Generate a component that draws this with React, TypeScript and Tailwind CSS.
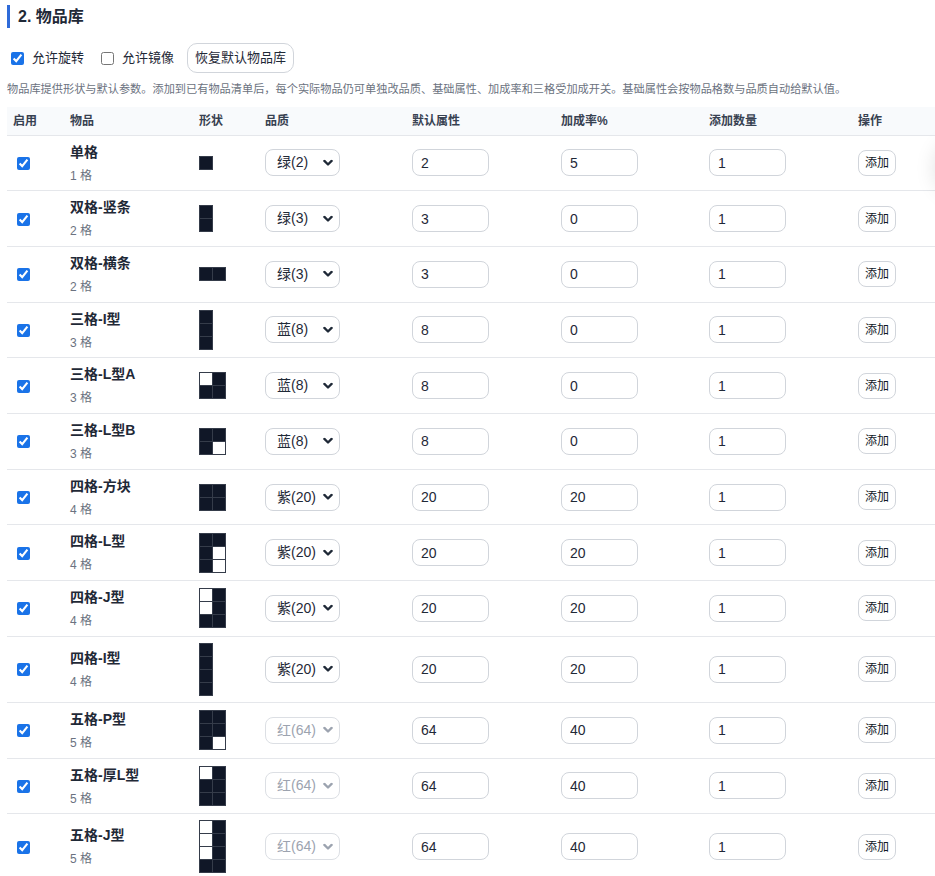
import React from "react";

type Item = {
  name: string;
  cells: number;
  quality: string;
  base: number;
  bonus: number;
  shape: number[][];
  muted?: boolean;
};

const ITEMS: Item[] = [
  { name: "单格", cells: 1, quality: "绿(2)", base: 2, bonus: 5, shape: [[1]] },
  { name: "双格-竖条", cells: 2, quality: "绿(3)", base: 3, bonus: 0, shape: [[1], [1]] },
  { name: "双格-横条", cells: 2, quality: "绿(3)", base: 3, bonus: 0, shape: [[1, 1]] },
  { name: "三格-I型", cells: 3, quality: "蓝(8)", base: 8, bonus: 0, shape: [[1], [1], [1]] },
  { name: "三格-L型A", cells: 3, quality: "蓝(8)", base: 8, bonus: 0, shape: [[0, 1], [1, 1]] },
  { name: "三格-L型B", cells: 3, quality: "蓝(8)", base: 8, bonus: 0, shape: [[1, 1], [1, 0]] },
  { name: "四格-方块", cells: 4, quality: "紫(20)", base: 20, bonus: 20, shape: [[1, 1], [1, 1]] },
  { name: "四格-L型", cells: 4, quality: "紫(20)", base: 20, bonus: 20, shape: [[1, 1], [1, 0], [1, 0]] },
  { name: "四格-J型", cells: 4, quality: "紫(20)", base: 20, bonus: 20, shape: [[0, 1], [0, 1], [1, 1]] },
  { name: "四格-I型", cells: 4, quality: "紫(20)", base: 20, bonus: 20, shape: [[1], [1], [1], [1]] },
  { name: "五格-P型", cells: 5, quality: "红(64)", base: 64, bonus: 40, shape: [[1, 1], [1, 1], [1, 0]], muted: true },
  { name: "五格-厚L型", cells: 5, quality: "红(64)", base: 64, bonus: 40, shape: [[0, 1], [1, 1], [1, 1]], muted: true },
  { name: "五格-J型", cells: 5, quality: "红(64)", base: 64, bonus: 40, shape: [[0, 1], [0, 1], [0, 1], [1, 1]], muted: true },
];

const QUALITIES = ["绿(2)", "绿(3)", "蓝(8)", "紫(20)", "红(64)"];

function ShapePreview({ shape }: { shape: number[][] }) {
  const cols = shape[0].length;
  return (
    <div
      className="inline-grid gap-px p-px bg-[#353c4a]"
      style={{ gridTemplateColumns: `repeat(${cols}, 12px)` }}
    >
      {shape.flatMap((row, r) =>
        row.map((v, c) => (
          <div
            key={`${r}-${c}`}
            className={v ? "w-[12px] h-[12px] bg-[#101727]" : "w-[12px] h-[12px] bg-white"}
          />
        ))
      )}
    </div>
  );
}

function QualitySelect({ value, muted }: { value: string; muted?: boolean }) {
  return (
    <div className="relative w-[75px]">
      <select
        defaultValue={value}
        className={
          muted
            ? "appearance-none w-full h-[27px] rounded-lg border border-[#dcdfe4] bg-white pl-[11px] text-[14px] leading-[25px] text-[#9ca3af] outline-none"
            : "appearance-none w-full h-[27px] rounded-lg border border-[#d1d5db] bg-white pl-[11px] text-[14px] leading-[25px] text-[#1f2937] outline-none"
        }
      >
        {QUALITIES.map((q) => (
          <option key={q} value={q}>
            {q}
          </option>
        ))}
      </select>
      <svg
        className="pointer-events-none absolute right-[7px] top-1/2 -translate-y-1/2"
        width="10"
        height="7"
        viewBox="0 0 10 7"
        fill="none"
      >
        <path
          d="M1.4 1.4 L5 5 L8.6 1.4"
          stroke={muted ? "#9ca3af" : "#1f2937"}
          strokeWidth="2.3"
          strokeLinecap="round"
          strokeLinejoin="round"
        />
      </svg>
    </div>
  );
}

function NumberBox({ value }: { value: number }) {
  return (
    <input
      type="text"
      defaultValue={String(value)}
      className="w-[77px] h-[27px] rounded-lg border border-[#d1d5db] bg-white pl-[8px] text-[14px] text-[#1f2937] outline-none"
    />
  );
}

export default function App() {
  return (
    <div
      className="relative h-[876px] w-[935px] overflow-hidden bg-white pl-[7px] text-[#1f2937]"
      style={{ fontFamily: '"Liberation Sans", "Noto Sans CJK SC", sans-serif' }}
    >
      {/* section title */}
      <div className="mt-[5px] h-[23px] border-l-[3px] border-[#2f6bd9] pl-[8px] text-[16px] font-bold leading-[23px]">
        2. 物品库
      </div>

      {/* options */}
      <div className="mt-[15px] flex h-[30px] items-center text-[13px]">
        <label className="ml-[4px] flex items-center gap-2">
          <input type="checkbox" defaultChecked className="m-0 h-[13px] w-[13px] accent-[#1a73e8]" />
          <span>允许旋转</span>
        </label>
        <label className="ml-[17px] flex items-center gap-2">
          <input type="checkbox" className="m-0 h-[13px] w-[13px] accent-[#1a73e8]" />
          <span>允许镜像</span>
        </label>
        <button className="ml-[13px] h-[30px] rounded-[10px] border border-[#d1d5db] bg-white px-[7px] text-[13px] text-[#1f2937]">
          恢复默认物品库
        </button>
      </div>

      <p className="mt-[8px] whitespace-nowrap text-[11.2px] leading-[16px] text-[#6b7280]">
        物品库提供形状与默认参数。添加到已有物品清单后，每个实际物品仍可单独改品质、基础属性、加成率和三格受加成开关。基础属性会按物品格数与品质自动给默认值。
      </p>

      <table className="mt-[10px] w-[928px] table-fixed border-collapse text-left">
        <colgroup>
          <col className="w-[57px]" />
          <col className="w-[129px]" />
          <col className="w-[66px]" />
          <col className="w-[147px]" />
          <col className="w-[149px]" />
          <col className="w-[148px]" />
          <col className="w-[149px]" />
          <col className="w-[83px]" />
        </colgroup>
        <thead>
          <tr className="h-[28px] border-b border-[#e5e7eb] bg-[#f8fafc] text-[12px] font-bold text-[#374151]">
            <th className="px-[6px]">启用</th>
            <th className="px-[6px]">物品</th>
            <th className="px-[6px]">形状</th>
            <th className="px-[6px]">品质</th>
            <th className="px-[6px]">默认属性</th>
            <th className="px-[6px]">加成率%</th>
            <th className="px-[6px]">添加数量</th>
            <th className="px-[6px]">操作</th>
          </tr>
        </thead>
        <tbody>
          {ITEMS.map((it) => (
            <tr key={it.name} className="border-b border-[#e5e7eb]">
              <td className="px-[6px] py-[5px] align-middle">
                <input
                  type="checkbox"
                  defaultChecked
                  className="ml-[4px] mt-[1px] block h-[13px] w-[13px] accent-[#1a73e8]"
                />
              </td>
              <td className="px-[6px] py-[5px] align-middle">
                <div className="text-[14px] font-bold leading-[22px] text-[#1f2937]">{it.name}</div>
                <div className="mt-[4px] text-[12px] leading-[18.7px] text-[#6b7280]">{it.cells} 格</div>
              </td>
              <td className="px-[6px] py-[6px] align-middle">
                <div className="flex">
                  <ShapePreview shape={it.shape} />
                </div>
              </td>
              <td className="px-[6px] py-[5px] align-middle">
                <QualitySelect value={it.quality} muted={it.muted} />
              </td>
              <td className="px-[6px] py-[5px] align-middle">
                <NumberBox value={it.base} />
              </td>
              <td className="px-[6px] py-[5px] align-middle">
                <NumberBox value={it.bonus} />
              </td>
              <td className="px-[6px] py-[5px] align-middle">
                <NumberBox value={1} />
              </td>
              <td className="px-[6px] py-[5px] align-middle">
                <button className="h-[26px] w-[38px] rounded-lg border border-[#d1d5db] bg-white text-[12px] text-[#111827]">
                  添加
                </button>
              </td>
            </tr>
          ))}
        </tbody>
      </table>

      {/* edge of a floating panel just past the right border */}
      <div className="pointer-events-none absolute right-[-57px] top-[140px] h-[56px] w-[56px] rounded-full bg-white shadow-[0_0_22px_rgba(0,0,0,0.14)]" />
    </div>
  );
}
